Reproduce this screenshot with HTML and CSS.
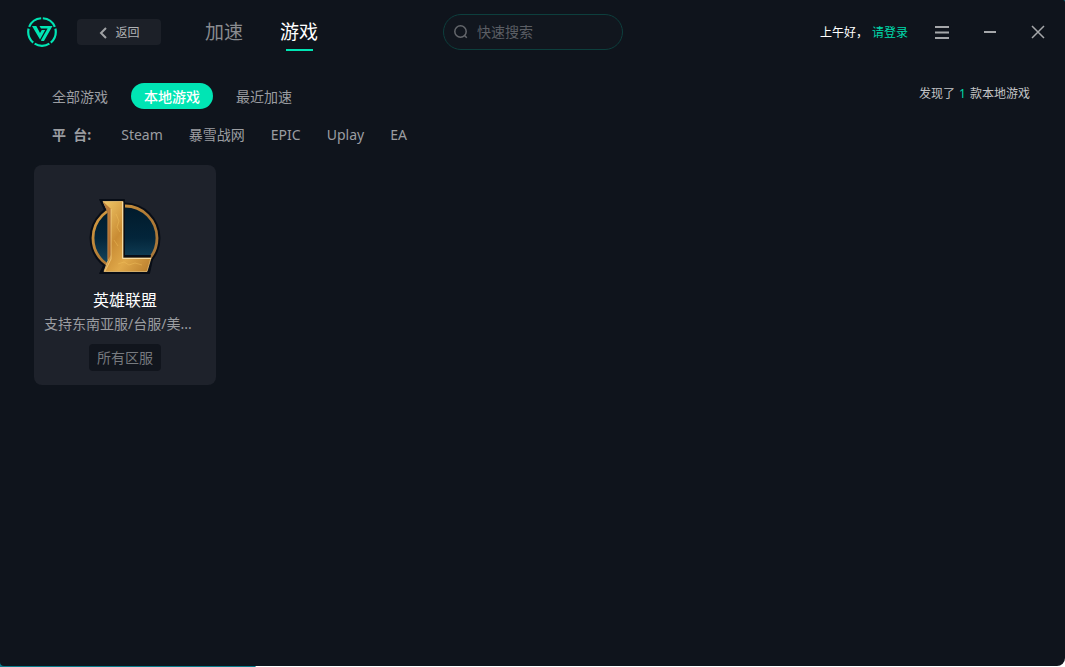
FILE: index.html
```html
<!DOCTYPE html>
<html lang="zh-CN">
<head>
<meta charset="utf-8">
<title>游戏</title>
<link rel="stylesheet" href="styles.css">
</head>
<body>
<div class="app">
  <header class="topbar">
    <svg class="logo" viewBox="0 0 30 30" aria-label="logo">
      <circle class="logo-ring" cx="15" cy="15" r="13.8" pathLength="100"/>
      <path class="logo-mark" d="M5 9h4.300L13 16l1.800-3h3.400L13 22.500z"/>
      <path class="logo-mark" d="M12.500 9h13L17 24h-2.800v-1.200l6.400-11.300H14z"/>
    </svg>
    <button class="back" type="button">
      <svg class="back-icon" viewBox="0 0 8 12"><path d="M7 1L2 6l5 5"/></svg>
      返回
    </button>
    <nav class="tabs">
      <a class="tab" href="#">加速</a>
      <a class="tab tab-active" href="#">游戏</a>
    </nav>
    <label class="search">
      <svg class="search-icon" viewBox="0 0 14 14"><circle cx="6.5" cy="6.5" r="5.7"/><path d="M10.5 10.5l2.3 2.3"/></svg>
      <input class="search-input" type="text" placeholder="快速搜索" aria-label="快速搜索">
    </label>
    <div class="account">
      <span>上午好，</span>
      <a class="login" href="#">请登录</a>
    </div>
    <div class="window-controls">
      <button class="control" type="button" aria-label="菜单"><svg viewBox="0 0 14 14"><path class="bars" d="M0 2h14M0 7.500h14M0 13h14"/></svg></button>
      <button class="control" type="button" aria-label="最小化"><svg viewBox="0 0 14 14"><path class="bars" d="M1 7h12"/></svg></button>
      <button class="control" type="button" aria-label="关闭"><svg viewBox="0 0 14 14"><path class="cross" d="M1 1l12 12M13 1L1 13"/></svg></button>
    </div>
  </header>
  <main class="content">
    <div class="filters">
      <nav class="scopes">
        <a class="scope" href="#">全部游戏</a>
        <a class="scope scope-active" href="#">本地游戏</a>
        <a class="scope" href="#">最近加速</a>
      </nav>
      <p class="found">发现了 <span class="count">1</span> 款本地游戏</p>
    </div>
    <nav class="platforms">
      <strong class="platforms-label">平  台:</strong>
      <a class="platform" href="#">Steam</a>
      <a class="platform" href="#">暴雪战网</a>
      <a class="platform" href="#">EPIC</a>
      <a class="platform" href="#">Uplay</a>
      <a class="platform" href="#">EA</a>
    </nav>
    <section class="games">
      <article class="card">
        <svg class="game-icon" viewBox="0 0 100 95" aria-hidden="true">
          <defs>
            <linearGradient id="sea" x1="0" y1="0" x2="0" y2="1"><stop offset="0" stop-color="#011a2b"/><stop offset=".5" stop-color="#03253a"/><stop offset="1" stop-color="#174c66"/></linearGradient>
            <linearGradient id="gold" x1="0" y1="0" x2="1" y2="1"><stop offset="0" stop-color="#f0c768"/><stop offset=".4" stop-color="#c98c34"/><stop offset=".65" stop-color="#e0a94a"/><stop offset="1" stop-color="#b87c2c"/></linearGradient>
            <linearGradient id="ring" x1="0" y1="0" x2="1" y2="1"><stop offset="0" stop-color="#d9a044"/><stop offset=".5" stop-color="#b07a35"/><stop offset="1" stop-color="#a5773c"/></linearGradient>
          </defs>
          <circle cx="50" cy="48" r="35.500" fill="#080d16"/>
          <path d="M24.500 9.500h25v57.500h28.500l-3.500 16.500H24.500l6.500-13V23z" fill="#080d16" stroke="#080d16"/>
          <circle cx="50" cy="48" r="32" fill="url(#sea)" stroke="url(#ring)" stroke-width="2.800"/>
          <path d="M50 12v53h26l-3 17H28l5-10V23l-6-11z" fill="#080d16"/>
          <path d="M28 11.500h20v56.500h28l-4 13.500H29l4-11V22z" fill="url(#gold)" stroke="#edc477" stroke-width=".8"/>
          <path d="M28 11.500L32.500 22v48.500L36 65V19z" fill="#9c5422" opacity=".6"/>
          <path d="M36 19v50l-6 12" fill="none" stroke="#ffe2a0" stroke-width=".6"/>
          <path d="M47.500 12v56.500H76" fill="none" stroke="#f5dba2"/>
          <path d="M41 24l3 7-2 6 3 5M39 50l4 6M43 74l6-2 5 3 6-2 7 2" fill="none" stroke="#f4c65f" opacity=".4"/>
        </svg>
        <h2 class="game-name">英雄联盟</h2>
        <p class="game-note">支持东南亚服/台服/美...</p>
        <span class="server">所有区服</span>
      </article>
    </section>
  </main>
</div>
</body>
</html>
```
FILE: styles.css
```css
* { box-sizing: border-box; }

body {
  margin: 0;
  min-height: 100vh;
  display: flex;
  padding-bottom: 1px;
  background:
    linear-gradient(#0b7c8c, #0b7c8c) left bottom / 24% 8px no-repeat,
    linear-gradient(#0b7c8c, #0b7c8c) right top / 8px 8px no-repeat,
    #fff;
  font-family: "Noto Sans", "Noto Sans CJK SC", sans-serif;
  font-size: 14px;
  line-height: 20px;
  color: #9b9da1;
}

a { color: inherit; text-decoration: none; }
p, h2 { margin: 0; }
svg { display: block; }
button { border: 0; padding: 0; font: inherit; color: inherit; background: none; }

.app {
  flex: 1;
  min-width: 0;
  background: #0f141c;
  border-radius: 0 2px 8px 4px;
}

.topbar {
  display: flex;
  align-items: center;
  height: 64px;
  padding: 0 20px 0 27px;
}

.logo { width: 30px; height: 30px; margin-right: 20px; }
.logo-ring {
  fill: none;
  stroke: #00e5b4;
  stroke-width: 2.200;
  stroke-dasharray: 18 2;
  stroke-dashoffset: 4;
}
.logo-mark { fill: #00e5b4; }

.back {
  display: flex;
  align-items: center;
  justify-content: center;
  gap: 8px;
  width: 84px;
  height: 26px;
  padding: 1px 0 0 1px;
  border-radius: 4px;
  background: #1c2028;
  font-size: 12px;
  color: #b0b1b4;
}
.back-icon { width: 8px; height: 12px; fill: none; stroke: #a0a2a5; stroke-width: 2; }

.tabs { display: flex; gap: 37px; margin-left: 44px; }
.tab {
  display: flex;
  flex-direction: column;
  align-items: center;
  gap: 3px;
  padding-top: 5px;
  font-size: 19px;
  line-height: 28px;
  color: #898b8f;
}
.tab::after { content: ""; width: 27px; height: 2px; }
.tab-active { color: #fff; }
.tab-active::after { background: #00e5b4; }

.search {
  display: flex;
  align-items: center;
  gap: 9px;
  width: 180px;
  height: 36px;
  margin-left: 125px;
  padding: 0 10px;
  border: 1px solid #0d3f3d;
  border-radius: 18px;
  background: #11161e;
}
.search-icon { flex: none; width: 14px; height: 14px; fill: none; stroke: #64676c; stroke-width: 1.500; }
.search-input {
  flex: 1;
  min-width: 0;
  padding: 0;
  border: 0;
  outline: 0;
  background: none;
  font: inherit;
  color: #fff;
}
.search-input::placeholder { color: #5b5e64; opacity: 1; }

.account { display: flex; gap: 4px; margin-left: auto; padding-top: 2px; font-size: 12px; color: #fff; }
.login { color: #00d9aa; }

.window-controls { display: flex; gap: 34px; margin-left: 27px; }
.control { width: 14px; height: 14px; }
.control svg { width: 14px; height: 14px; fill: none; stroke: #a5a7aa; }
.bars { stroke-width: 2; }
.cross { stroke-width: 1.500; }

.content { padding: 19px 34px; }

.filters { display: flex; align-items: flex-start; justify-content: space-between; }
.scopes { display: flex; gap: 10px; margin-left: 5px; }
.scope { padding: 4px 13px 2px; border-radius: 13px; }
.scope-active { background: #00e5b4; color: #fff; font-weight: 500; }
.found { padding: 1px 1px 0 0; font-size: 12px; color: #c3c4c6; }
.count { margin: 0 1px; color: #00d9aa; }

.platforms { display: flex; gap: 26px; margin: 16px 0 20px 18px; }
.platforms-label { margin-right: 4px; white-space: pre; }

.games { display: grid; grid-template-columns: repeat(auto-fill, 182px); gap: 20px; }
.card {
  display: flex;
  flex-direction: column;
  align-items: center;
  padding: 25px 10px 14px;
  border-radius: 8px;
  background: #1e222b;
}
.game-icon { width: 100px; height: 95px; }
.game-name {
  margin-top: 3px;
  font-size: 16px;
  line-height: 24px;
  font-weight: 400;
  color: #fff;
}
.game-note {
  align-self: stretch;
  margin: 2px 0 10px;
}
.server {
  padding: 4px 8px 3px;
  border-radius: 4px;
  background: #11151d;
  color: #777a7f;
}
```
